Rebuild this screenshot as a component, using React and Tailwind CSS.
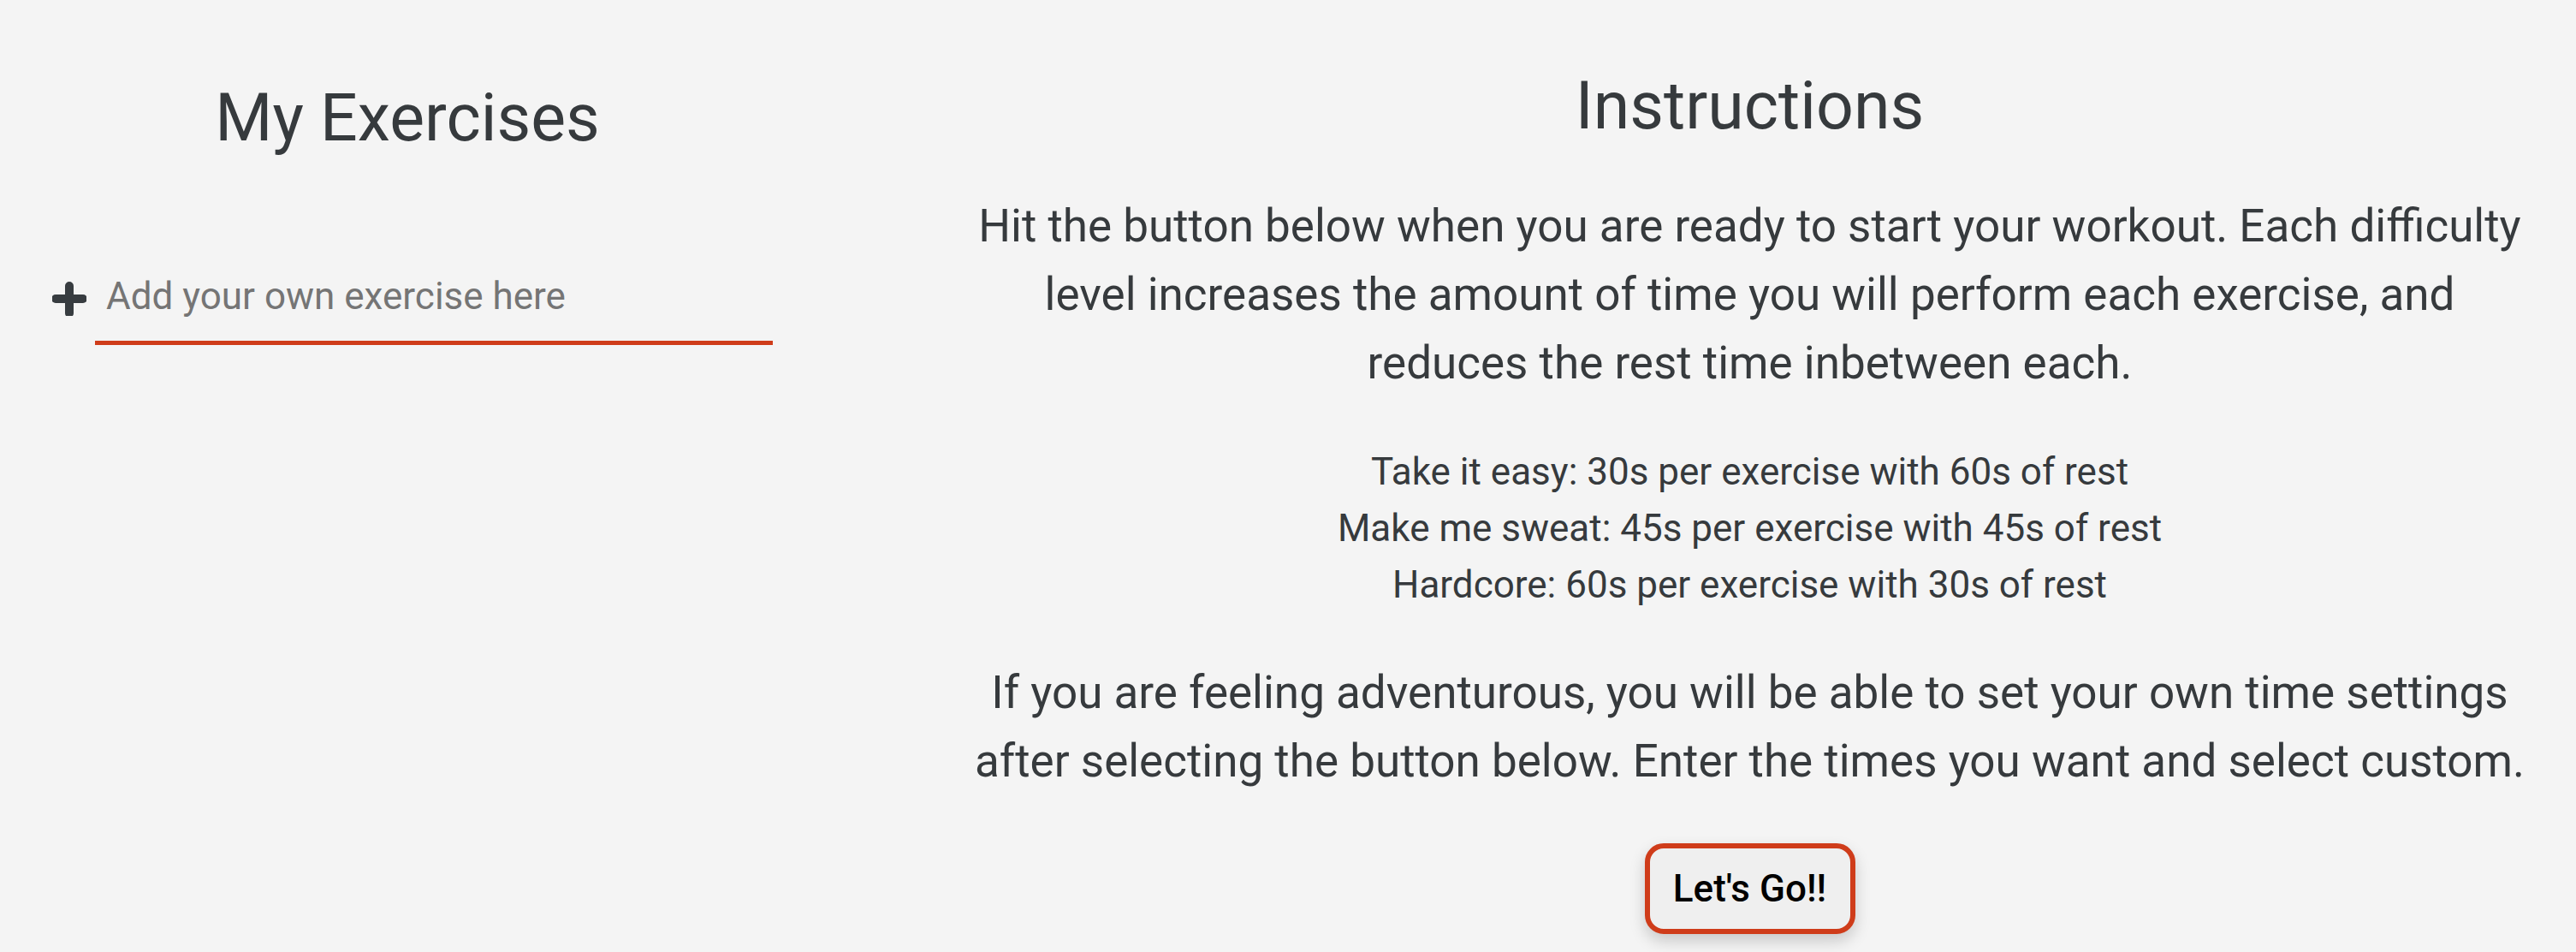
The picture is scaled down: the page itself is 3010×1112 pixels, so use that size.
const PlusIcon = () => (
  <svg width="40" height="40" viewBox="0 0 40 40" className="shrink-0">
    <path d="M20 5v32M4 20h32" stroke="#373c40" strokeWidth="10" strokeLinecap="round" />
  </svg>
);

const levels = [
  "Take it easy: 30s per exercise with 60s of rest",
  "Make me sweat: 45s per exercise with 45s of rest",
  "Hardcore: 60s per exercise with 30s of rest",
];

export default function App() {
  return (
    <div className="min-h-[1112px] w-full bg-[#f4f4f4] text-[#363a3d] font-['Roboto',sans-serif] flex">
      {/* left column */}
      <div className="w-[952px] shrink-0 flex flex-col">
        <h1 className="mt-[93px] text-center text-[77px] leading-[90px] font-normal">My Exercises</h1>
        <div className="mt-[111px] ml-[61px] flex items-center gap-[10px]">
          <PlusIcon />
          <input
            type="text"
            placeholder="Add your own exercise here"
            className="w-[792px] h-[109px] bg-transparent border-b-[5px] border-[#cf3c1a] pl-[13px] text-[44px] outline-none placeholder:text-[#757575]"
          />
        </div>
      </div>

      {/* right column */}
      <div className="ml-[180px] w-[1825px] flex flex-col items-center text-center">
        <h1 className="mt-[79px] text-[77px] leading-[90px] font-normal">Instructions</h1>
        <p className="mt-[55px] text-[53px] leading-[80px]">
          Hit the button below when you are ready to start your workout. Each difficulty level increases the amount
          of time you will perform each exercise, and reduces the rest time inbetween each.
        </p>
        <div className="mt-[54px] text-[44px] leading-[66px]">
          {levels.map((l) => (
            <p key={l}>{l}</p>
          ))}
        </div>
        <p className="mt-[53px] text-[53px] leading-[80px]">
          If you are feeling adventurous, you will be able to set your own time settings after selecting the button
          below. Enter the times you want and select custom.
        </p>
        <button className="mt-[56px] w-[246px] h-[106px] rounded-[22px] border-[6px] border-[#cf3c1a] bg-[#efefef] text-black text-[44px] font-medium shadow-[0_8px_18px_rgba(0,0,0,0.18)]">
          Let's Go!!
        </button>
      </div>
    </div>
  );
}
